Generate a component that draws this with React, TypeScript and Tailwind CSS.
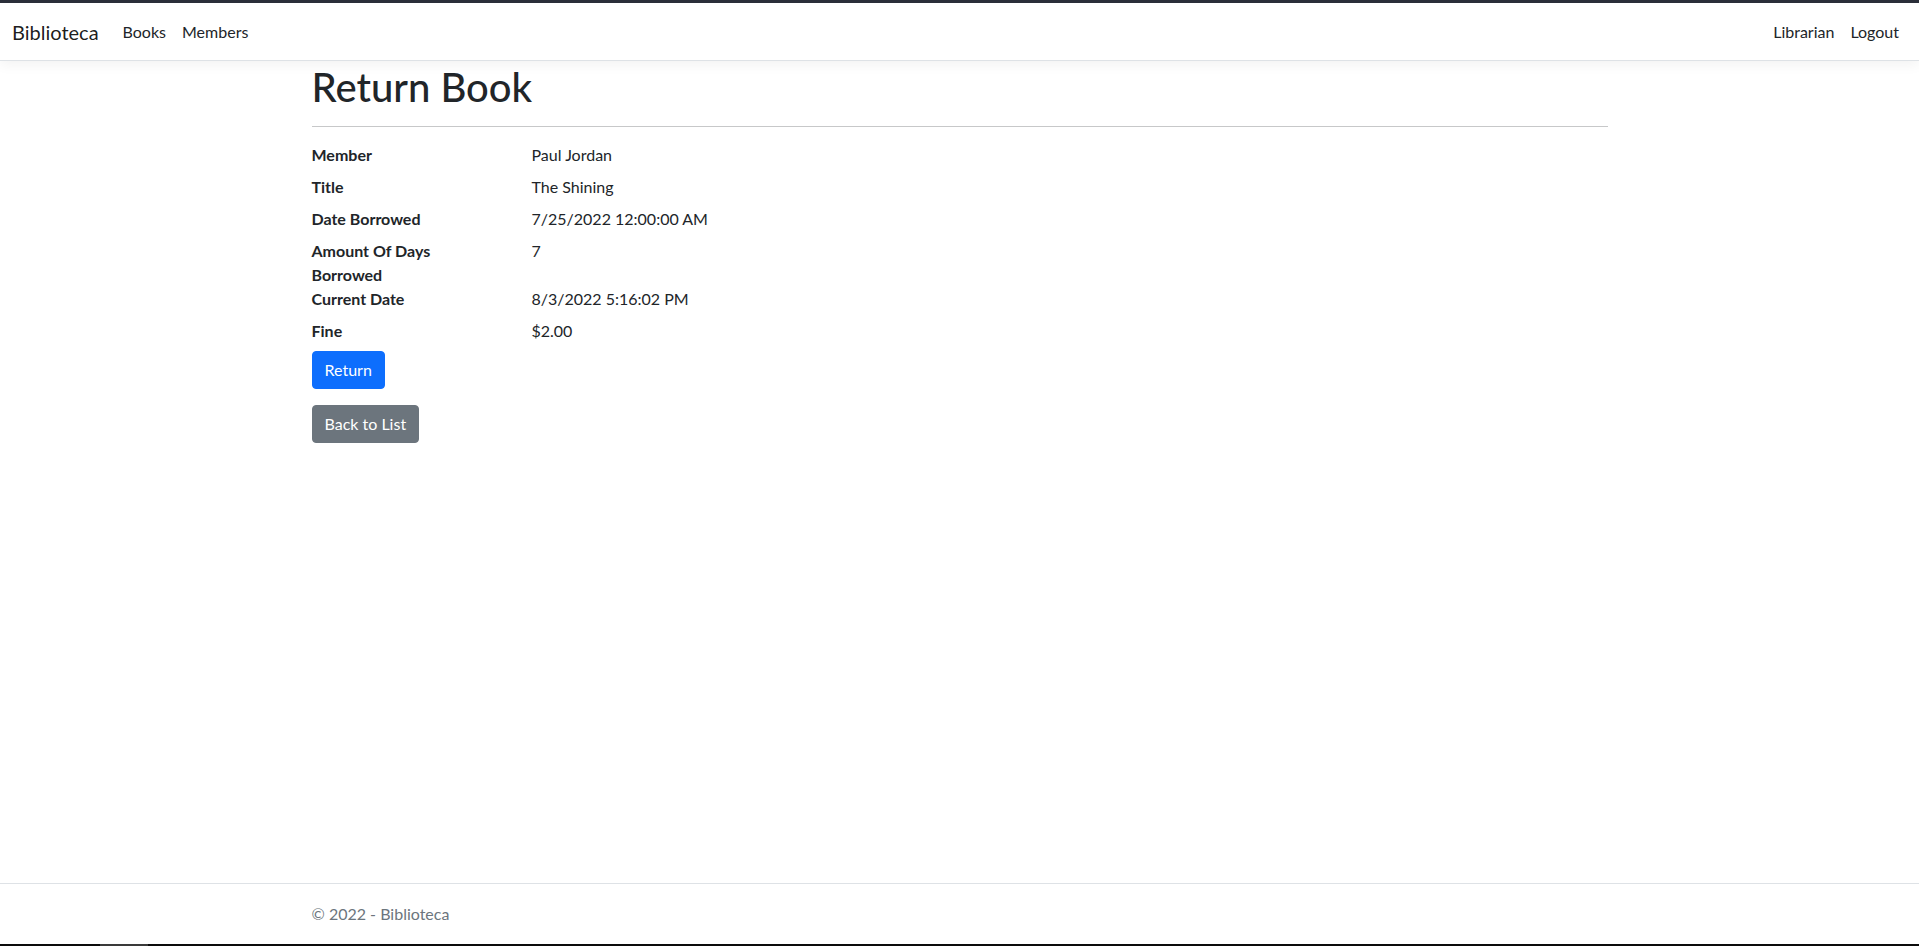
import React from "react";

const font = { fontFamily: '"Segoe UI", Lato, "Noto Sans", "Liberation Sans", sans-serif' };

const rows: { label: string; value: string }[] = [
  { label: "Member", value: "Paul Jordan" },
  { label: "Title", value: "The Shining" },
  { label: "Date Borrowed", value: "7/25/2022 12:00:00 AM" },
  { label: "Amount Of Days Borrowed", value: "7" },
  { label: "Current Date", value: "8/3/2022 5:16:02 PM" },
  { label: "Fine", value: "$2.00" },
];

function Navbar() {
  return (
    <nav className="relative z-10 flex h-[58px] items-center justify-between border-b border-[#dee2e6] bg-white px-3 shadow-[0_4px_12px_rgba(0,0,0,0.05)]">
      <div className="flex items-center">
        <a href="#" className="mr-4 py-[5px] text-[20px] leading-[30px] text-black/90">
          Biblioteca
        </a>
        <a href="#" className="px-2 py-2 text-base leading-6 text-[#212529]">
          Books
        </a>
        <a href="#" className="px-2 py-2 text-base leading-6 text-[#212529]">
          Members
        </a>
      </div>
      <div className="flex items-center">
        <a href="#" className="px-2 py-2 text-base leading-6 text-[#212529]">
          Librarian
        </a>
        <a href="#" className="px-2 py-2 text-base leading-6 text-[#212529]">
          Logout
        </a>
      </div>
    </nav>
  );
}

export default function App() {
  return (
    <div className="flex min-h-screen flex-col bg-white text-[#212529]" style={font}>
      <div className="h-[3px] bg-[#2b2f3a]" />
      <Navbar />

      <main className="mx-auto w-full max-w-[1320px] flex-1 px-3">
        <h1 className="mt-[2px] text-[40px] font-medium leading-[48px]">Return Book</h1>
        <hr className="mt-[15px] mb-4 border-t border-[#212529]/25" />

        <dl className="grid grid-cols-[196px_1fr] gap-x-6 text-base leading-6">
          {rows.map((r) => (
            <React.Fragment key={r.label}>
              <dt className="pr-4 font-bold">{r.label}</dt>
              <dd className="mb-2">{r.value}</dd>
            </React.Fragment>
          ))}
        </dl>

        <form className="mb-4" onSubmit={(e) => e.preventDefault()}>
          <button
            type="submit"
            className="rounded-[4px] border border-[#0d6efd] bg-[#0d6efd] px-3 py-[6px] text-base leading-6 text-white"
          >
            Return
          </button>
        </form>
        <div>
          <a
            href="#"
            className="inline-block rounded-[4px] border border-[#6c757d] bg-[#6c757d] px-3 py-[6px] text-base leading-6 text-white"
          >
            Back to List
          </a>
        </div>
      </main>

      <footer className="border-t border-[#dee2e6]">
        <div className="mx-auto w-full max-w-[1320px] px-3 text-base leading-[60px] text-[#6c757d]">
          © 2022 - Biblioteca
        </div>
      </footer>
      <div className="flex h-[2px] bg-[#0c0c0c]">
        <div className="ml-[100px] w-[48px] bg-[#3a3a3a]" />
      </div>
    </div>
  );
}
